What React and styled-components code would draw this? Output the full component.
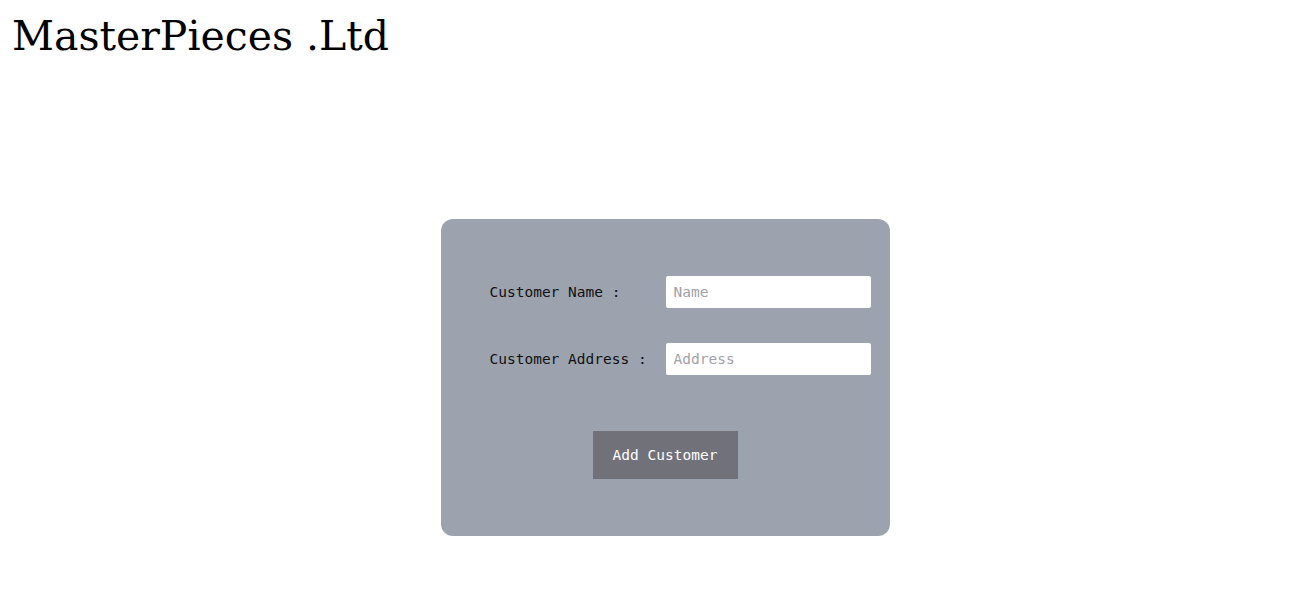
import React from "react";
import styled, { createGlobalStyle } from "styled-components";

const GlobalStyle = createGlobalStyle`
  body {
    margin: 0;
    background: #ffffff;
  }
`;

const Page = styled.div`
  padding: 8px 12px;
`;

const Brand = styled.h1`
  margin: 0;
  font-family: "DejaVu Serif", "Liberation Serif", serif;
  font-weight: normal;
  font-size: 41px;
  line-height: 56px;
  color: #000;
`;

const Stage = styled.main`
  display: flex;
  justify-content: center;
  padding: 155px 0 0 20px;
`;

const Card = styled.form`
  width: 449px;
  height: 317px;
  box-sizing: border-box;
  padding: 57px 18px 57px 49px;
  background: #9ca3af;
  border-radius: 12px;
  display: flex;
  flex-direction: column;
  font-family: "DejaVu Sans Mono", "Liberation Mono", monospace;
  font-size: 14.5px;
`;

const Row = styled.div`
  display: grid;
  grid-template-columns: 176px 205px;
  align-items: center;
  margin-bottom: ${({ gap }) => gap}px;
`;

const Label = styled.label`
  color: #111;
  white-space: pre;
`;

const Input = styled.input`
  height: 32px;
  box-sizing: border-box;
  border: none;
  border-radius: 2px;
  padding: 0 8px;
  font: inherit;
  background: #fff;
  outline: none;
  &::placeholder {
    color: #a1a1aa;
  }
`;

const Actions = styled.div`
  display: flex;
  justify-content: center;
  margin-left: -31px;
`;

const Button = styled.button`
  width: 145px;
  height: 48px;
  border: none;
  border-radius: 0;
  background: #71717a;
  color: #fff;
  font: inherit;
  cursor: pointer;
`;

export default function App() {
  return (
    <>
      <GlobalStyle />
      <Page>
        <Brand>MasterPieces .Ltd</Brand>
        <Stage>
          <Card onSubmit={(e) => e.preventDefault()}>
            <Row gap={35}>
              <Label htmlFor="name">Customer Name :</Label>
              <Input id="name" placeholder="Name" />
            </Row>
            <Row gap={56}>
              <Label htmlFor="address">Customer Address :</Label>
              <Input id="address" placeholder="Address" />
            </Row>
            <Actions>
              <Button type="submit">Add Customer</Button>
            </Actions>
          </Card>
        </Stage>
      </Page>
    </>
  );
}
